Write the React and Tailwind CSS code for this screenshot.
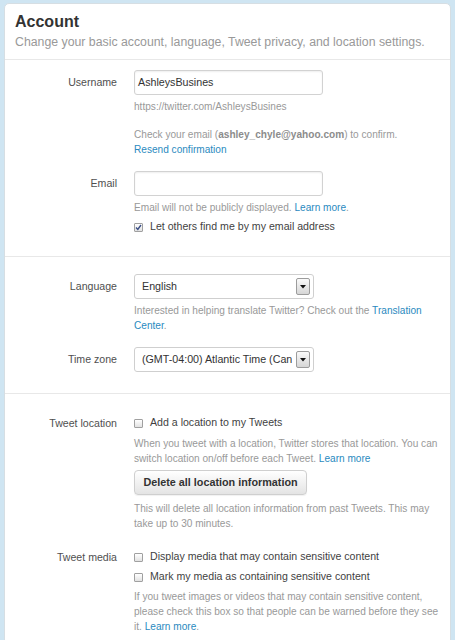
import clsx from "clsx"

const font = { fontFamily: '"Liberation Sans", Arial, sans-serif' }

function Row({ label, tall = true, className, children }) {
  return (
    <div className={clsx("flex", className)}>
      <div
        className={clsx(
          "w-[112px] shrink-0 text-right text-[10.6px] text-[#4f4f4f]",
          tall ? "h-[25px] leading-[25px]" : "h-[20px] leading-[20px]"
        )}
      >
        {label}
      </div>
      <div className="ml-[17px] w-[306px]">{children}</div>
    </div>
  )
}

function Help({ className, children }) {
  return <p className={clsx("text-[10.1px] leading-[15px] text-[#999]", className)}>{children}</p>
}

function A({ children }) {
  return <a className="text-[#2a8ac0]">{children}</a>
}

function Checkbox({ checked, label, className }) {
  return (
    <div className={clsx("flex h-[20px] items-center", className)}>
      <span className="flex h-[9px] w-[9px] items-center justify-center rounded-[1px] border border-[#a0a0a0] bg-linear-to-b from-white to-[#e2e2e2]">
        {checked && (
          <svg width="7" height="7" viewBox="0 0 7 7">
            <path d="M1 3.6 L2.8 5.4 L6 1" fill="none" stroke="#3b4f86" strokeWidth="1.4" />
          </svg>
        )}
      </span>
      <span className="ml-[7px] text-[10.6px] text-[#3f3f3f]">{label}</span>
    </div>
  )
}

function Input({ value }) {
  return (
    <div className="h-[25px] w-[189px] rounded-[3px] border border-[#d2d2d2] bg-white pl-[3px] text-[10.7px] leading-[23px] text-[#333] shadow-[inset_0_1px_2px_rgba(0,0,0,0.07)]">
      {value}
    </div>
  )
}

function Select({ value, className }) {
  return (
    <div
      className={clsx(
        "relative flex h-[25px] w-[180px] items-center rounded-[3px] border border-[#cfcfcf] bg-white pl-[7px] text-[10.7px] text-[#333]",
        className
      )}
    >
      <span className="w-[150px] overflow-hidden whitespace-nowrap">{value}</span>
      <span className="absolute right-[3px] top-[3px] flex h-[17px] w-[14px] items-center justify-center rounded-[2px] border border-[#9c9c9c] bg-linear-to-b from-[#fafafa] to-[#d6d6d6]">
        <svg width="6" height="4" viewBox="0 0 6 4">
          <path d="M0 0 H6 L3 3.5 Z" fill="#111" />
        </svg>
      </span>
    </div>
  )
}

export default function App() {
  return (
    <div className="min-h-screen overflow-hidden bg-[#cfe5f2] pt-[3px]" style={font}>
      <div className="mx-[4px] rounded-[5px] border border-[#d6dee3] bg-white pb-[40px]">
        <div className="border-b border-[#e8e8e8] px-[10px] pb-[10px] pt-[8px]">
          <h2 className="text-[16px] font-bold leading-[20px] text-[#333]">Account</h2>
          <p className="mt-[3px] text-[12.3px] leading-[14px] text-[#999]">
            Change your basic account, language, Tweet privacy, and location settings.
          </p>
        </div>

        <div className="pb-[19px] pt-[10px]">
          <Row label="Username">
            <Input value="AshleysBusines" />
            <Help className="mt-[4px]">https://twitter.com/AshleysBusines</Help>
            <Help className="mt-[13px]">
              Check your email (<b className="text-[#8c8c8c]">ashley_chyle@yahoo.com</b>) to confirm.
              <br />
              <A>Resend confirmation</A>
            </Help>
          </Row>
          <Row label="Email" className="mt-[14px]">
            <Input value="" />
            <Help className="mt-[4px]">
              Email will not be publicly displayed. <A>Learn more</A>.
            </Help>
            <Checkbox checked label="Let others find me by my email address" className="mt-[2px]" />
          </Row>
        </div>

        <div className="border-t border-[#e8e8e8] pb-[21px] pt-[17px]">
          <Row label="Language">
            <Select value="English" />
            <Help className="mt-[4px]">
              Interested in helping translate Twitter? Check out the <A>Translation Center</A>.
            </Help>
          </Row>
          <Row label="Time zone" className="mt-[14px]">
            <Select value="(GMT-04:00) Atlantic Time (Canada)" />
          </Row>
        </div>

        <div className="border-t border-[#e8e8e8] pt-[19px]">
          <Row label="Tweet location" tall={false}>
            <Checkbox label="Add a location to my Tweets" />
            <Help className="mt-[3px]">
              When you tweet with a location, Twitter stores that location. You can switch location
              on/off before each Tweet. <A>Learn more</A>
            </Help>
            <button className="mt-[4px] h-[25px] w-[173px] rounded-[4px] border border-[#cfcfcf] bg-linear-to-b from-white to-[#e4e4e4] text-[10.8px] font-bold text-[#333] shadow-[0_1px_1px_rgba(0,0,0,0.06)]">
              Delete all location information
            </button>
            <Help className="mt-[6px]">
              This will delete all location information from past Tweets. This may take up to 30
              minutes.
            </Help>
          </Row>
          <Row label="Tweet media" tall={false} className="mt-[16px]">
            <Checkbox label="Display media that may contain sensitive content" />
            <Checkbox label="Mark my media as containing sensitive content" />
            <Help className="mt-[2px]">
              If you tweet images or videos that may contain sensitive content, please check this
              box so that people can be warned before they see it. <A>Learn more</A>.
            </Help>
          </Row>
        </div>
      </div>
    </div>
  )
}
